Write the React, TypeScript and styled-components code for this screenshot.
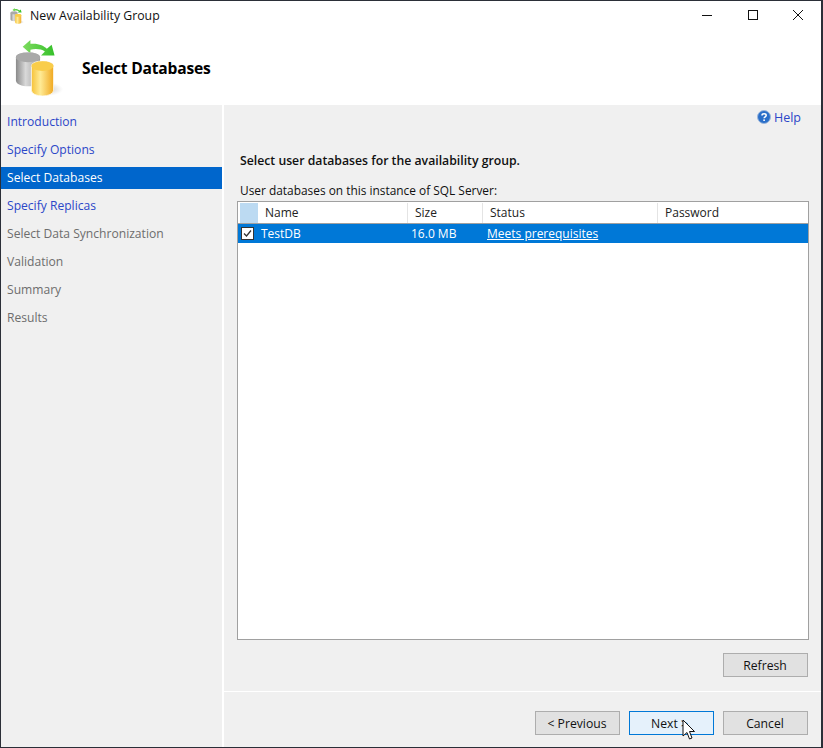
import React from "react";
import styled, { createGlobalStyle } from "styled-components";

const Global = createGlobalStyle`
  html, body { margin: 0; padding: 0; background: #fff; }
  body { font-family: "Open Sans", "Noto Sans", "Liberation Sans", sans-serif; font-size: 12px; color: #1a1a1a; }
`;
const Window = styled.div`
  width: 823px; height: 748px; box-sizing: border-box;
  border: 1px solid #2b2f38; border-right-width: 2px; border-bottom-width: 1px;
  display: flex; flex-direction: column; background: #fff; overflow: hidden; position: relative;
`;
const TitleBar = styled.div`
  height: 30px; display: flex; align-items: center; padding-left: 9px; gap: 4px; flex: none;
`;
const TitleText = styled.span`font-size: 12.3px; color: #111; position: relative; top: -1px;`;
const WinButtons = styled.div`margin-left: auto; display: flex; height: 30px; align-items: center; position: relative; top: -1px;`;
const WinButton = styled.div`width: 45.5px; height: 30px; display: flex; align-items: center; justify-content: center;`;
const Banner = styled.div`
  height: 74px; flex: none; display: flex; align-items: center; padding-left: 13px; gap: 12px;
`;
const BannerTitle = styled.h1`
  margin: 0; font-size: 15.6px; font-weight: 700; color: #000; letter-spacing: -0.2px;
`;
const Body = styled.div`flex: 1; display: flex; gap: 2px; min-height: 0;`;
const Sidebar = styled.nav`
  width: 221px; flex: none; background: #f0f0f0; padding-top: 6px; display: flex; flex-direction: column; gap: 6px;
`;
const NavItem = styled.div<{ $state: "link" | "active" | "off" }>`
  height: 22px; line-height: 21px; padding-left: 6px; font-size: 12.1px;
  color: ${p => p.$state === "link" ? "#2b47c8" : p.$state === "active" ? "#fff" : "#6d6d6d"};
  background: ${p => p.$state === "active" ? "#0066cc" : "transparent"};
`;
const Main = styled.main`flex: 1; background: #f0f0f0; display: flex; flex-direction: column; min-width: 0;`;
const HelpRow = styled.div`
  height: 24px; display: flex; justify-content: flex-end; align-items: center; gap: 3px; padding-right: 20px; color: #2b47c8; font-size: 12.5px; flex: none;
`;
const Content = styled.div`flex: 1; display: flex; flex-direction: column; padding: 23px 13px 0 13px; min-height: 0;`;
const Heading = styled.div`font-size: 12.25px; font-weight: 600; color: #111; height: 18px; line-height: 18px; margin-left: 3px;`;
const SubHeading = styled.div`font-size: 11.9px; color: #111; height: 18px; line-height: 18px; margin: 11px 0 2px 3px;`;
const Table = styled.div`
  width: 572px; height: 439px; box-sizing: border-box; border: 1px solid #a0a0a0; background: #fff; flex: none; display: flex; flex-direction: column;
`;
const HeadRow = styled.div`
  height: 22px; box-sizing: border-box; padding-top: 1px; display: flex; border-bottom: 1px solid #a0a0a0; flex: none; background: #fff;
`;
const HeadCorner = styled.div`width: 18px; margin-left: 2px; background: #bcdaf2; flex: none;`;
const HeadCell = styled.div<{ $w: number; $pad?: number }>`
  width: ${p => p.$w}px; box-sizing: border-box; flex: none; line-height: 19px; padding-left: ${p => p.$pad ?? 7}px;
  border-right: 1px solid #e4e4e4; color: #222;
  &:last-child { border-right: none; flex: 1; }
`;
const DataRow = styled.div`height: 19px; background: #0078d7; display: flex; align-items: center; color: #fff; flex: none;`;
const CheckBox = styled.div`
  width: 13px; height: 13px; box-sizing: border-box; border: 1px solid #333; background: #fff; margin-left: 3px; flex: none;
  display: flex; align-items: center; justify-content: center;
`;
const DataCell = styled.div<{ $w: number; $pad?: number }>`
  width: ${p => p.$w}px; flex: none; box-sizing: border-box; padding-left: ${p => p.$pad ?? 7}px; line-height: 19px;
`;
const RowLink = styled.span`text-decoration: underline;`;
const RefreshRow = styled.div`display: flex; justify-content: flex-end; margin-top: 13px; width: 571px; flex: none;`;
const Footer = styled.div`
  margin-top: 14px; border-top: 1px solid #fff; height: 56px; box-sizing: border-box; flex: none;
  display: flex; justify-content: flex-end; gap: 9px; padding: 19px 13px 0 0;
`;
const Button = styled.div<{ $focus?: boolean }>`
  width: 85px; height: 24px; box-sizing: border-box; display: flex; align-items: center; justify-content: center;
  font-size: 12.2px; color: #111; padding-right: ${p => p.$focus ? 4 : 1}px;
  background: ${p => p.$focus ? "#e5f1fb" : "#e1e1e1"};
  border: 1px solid ${p => p.$focus ? "#0078d7" : "#adadad"};
`;
const Cursor = styled.svg`position: absolute; left: 681px; top: 718px; pointer-events: none;`;

const DbIcon = ({ size }: { size: number }) => (
  <svg width={size} height={size} viewBox="0 0 56 58" style={{ flex: "none" }}>
    <defs>
      <linearGradient id={`g${size}`} x1="0" x2="1" y1="0" y2="0">
        <stop offset="0" stopColor="#8a8a8a" /><stop offset="0.4" stopColor="#d9d9d9" /><stop offset="1" stopColor="#9a9a9a" />
      </linearGradient>
      <linearGradient id={`y${size}`} x1="0" x2="1" y1="0" y2="0">
        <stop offset="0" stopColor="#f6c238" /><stop offset="0.4" stopColor="#ffeb96" /><stop offset="1" stopColor="#f0a820" />
      </linearGradient>
      <linearGradient id={`s${size}`} x1="0" x2="1" y1="0" y2="0">
        <stop offset="0" stopColor="#7edb5f" /><stop offset="1" stopColor="#35c02a" />
      </linearGradient>
      <radialGradient id={`b${size}`}>
        <stop offset="0" stopColor="#9a9a9a" stopOpacity="0.6" /><stop offset="1" stopColor="#bbb" stopOpacity="0" />
      </radialGradient>
    </defs>
    <ellipse cx="33" cy="51" rx="17" ry="7" fill={`url(#b${size})`} />
    <path d="M8 7 L16 0 V4 C24 3 30 6 33 9 L38 5 L41 16 L27 16 L31 12 C27 9 21 9 16 10 V14 Z" fill={`url(#s${size})`} />
    <path d="M1 18 C1 11 26 11 26 18 V42 C26 50 1 50 1 42 Z" fill={`url(#g${size})`} />
    <ellipse cx="13.5" cy="18" rx="12.5" ry="5" fill="#a9a9a9" />
    <path d="M17 27 C17 20 40 20 40 27 V52 C40 60 17 60 17 52 Z" fill={`url(#y${size})`} stroke="#fff" strokeWidth="0.8" />
    <ellipse cx="28.5" cy="27" rx="11.5" ry="5" fill="#f9cd4a" />
  </svg>
);

export default function App() {
  return (
    <>
      <Global />
      <Window>
        <TitleBar>
          <DbIcon size={16} />
          <TitleText>New Availability Group</TitleText>
          <WinButtons>
            <WinButton><svg width="10" height="10"><path d="M0 5.5H10" stroke="#111" /></svg></WinButton>
            <WinButton><svg width="10" height="10"><rect x="0.5" y="0.5" width="9" height="9" fill="none" stroke="#111" /></svg></WinButton>
            <WinButton><svg width="10" height="10"><path d="M0 0L10 10M10 0L0 10" stroke="#111" /></svg></WinButton>
          </WinButtons>
        </TitleBar>
        <Banner>
          <DbIcon size={56} />
          <BannerTitle>Select Databases</BannerTitle>
        </Banner>
        <Body>
          <Sidebar>
            <NavItem $state="link">Introduction</NavItem>
            <NavItem $state="link">Specify Options</NavItem>
            <NavItem $state="active">Select Databases</NavItem>
            <NavItem $state="link">Specify Replicas</NavItem>
            <NavItem $state="off">Select Data Synchronization</NavItem>
            <NavItem $state="off">Validation</NavItem>
            <NavItem $state="off">Summary</NavItem>
            <NavItem $state="off">Results</NavItem>
          </Sidebar>
          <Main>
            <HelpRow>
              <svg width="14" height="14" viewBox="0 0 14 14">
                <circle cx="7" cy="7" r="6.5" fill="#2a6fc9" stroke="#9db8dc" />
                <path d="M5 5.4C5 3.2 9.2 3.2 9.2 5.4C9.2 6.8 7.1 6.8 7.1 8.3" fill="none" stroke="#fff" strokeWidth="1.5" />
                <rect x="6.3" y="9.4" width="1.6" height="1.6" fill="#fff" />
              </svg>
              Help
            </HelpRow>
            <Content>
              <Heading>Select user databases for the availability group.</Heading>
              <SubHeading>User databases on this instance of SQL Server:</SubHeading>
              <Table>
                <HeadRow>
                  <HeadCorner />
                  <HeadCell $w={150} $pad={7}>Name</HeadCell>
                  <HeadCell $w={75}>Size</HeadCell>
                  <HeadCell $w={175}>Status</HeadCell>
                  <HeadCell $w={150}>Password</HeadCell>
                </HeadRow>
                <DataRow>
                  <CheckBox>
                    <svg width="11" height="11" viewBox="0 0 11 11"><path d="M2 5.5L4.5 8L9 2.5" fill="none" stroke="#333" strokeWidth="1.3" /></svg>
                  </CheckBox>
                  <DataCell $w={154} $pad={7}>TestDB</DataCell>
                  <DataCell $w={75} $pad={3}>16.0 MB</DataCell>
                  <DataCell $w={175} $pad={4}><RowLink>Meets prerequisites</RowLink></DataCell>
                </DataRow>
              </Table>
              <RefreshRow><Button>Refresh</Button></RefreshRow>
            </Content>
            <Footer>
              <Button>&lt; Previous</Button>
              <Button $focus>Next &gt;</Button>
              <Button>Cancel</Button>
            </Footer>
          </Main>
        </Body>
        <Cursor width="14" height="22" viewBox="0 0 14 22">
          <path d="M1 1V17L5 13.5L7.5 20L10 19L7.5 12.5H12.5Z" fill="#fff" stroke="#111" strokeWidth="1" />
        </Cursor>
      </Window>
    </>
  );
}
